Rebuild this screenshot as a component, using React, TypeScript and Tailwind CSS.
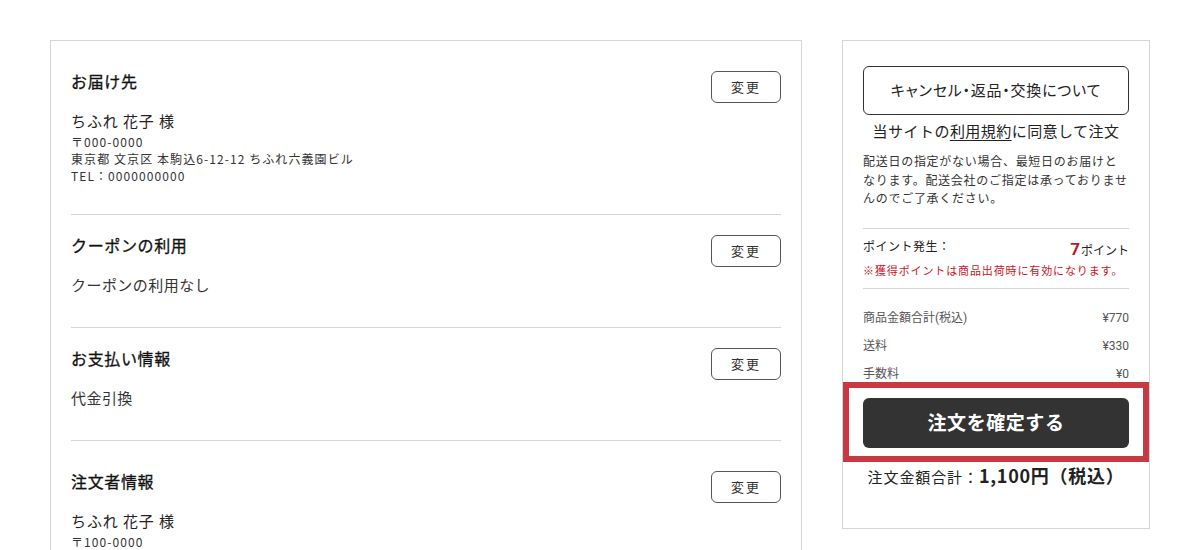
import React from 'react';

const jp = { fontFamily: '"Noto Sans CJK JP", "Noto Sans", sans-serif' };

function EditButton() {
  return (
    <button className="w-[70px] h-[32px] shrink-0 rounded-[6px] border border-[#555] bg-white text-[13px] tracking-[0.15em] text-[#333] flex items-center justify-center">
      変更
    </button>
  );
}

function Section({ title, top, children, last }: { title: string; top: string; children: React.ReactNode; last?: boolean }) {
  return (
    <div className={`${top} pb-[30px] ${last ? '' : 'border-b border-[#d6d6d6]'}`}>
      <div className="flex justify-between items-start">
        <h2 className="text-[16px] leading-[20px] font-normal tracking-[0.04em] text-[#111] [-webkit-text-stroke:0.3px_#111]">{title}</h2>
        <EditButton />
      </div>
      <div className="mt-[6px]">{children}</div>
    </div>
  );
}

function PriceRow({ label, value }: { label: string; value: string }) {
  return (
    <div className="h-[28px] flex items-center justify-between text-[12px] text-[#555]" style={{ fontFamily: 'Roboto, "Noto Sans CJK JP", sans-serif' }}>
      <span>{label}</span>
      <span>{value}</span>
    </div>
  );
}

export default function App() {
  return (
    <div className="min-h-[550px] bg-white pt-[40px] px-[50px] text-[#222]" style={jp}>
      <div className="flex items-start gap-[40px]">
        {/* left column */}
        <div className="w-[752px] shrink-0 border border-[#d6d6d6] px-[20px]">
          <Section title="お届け先" top="pt-[30px]">
            <p className="text-[15px] leading-[24px] tracking-[0.06em]">ちふれ 花子 様</p>
            <div className="text-[12px] leading-[17px] tracking-[0.09em] text-[#333]">
              <p>〒000-0000</p>
              <p>東京都 文京区 本駒込6-12-12 ちふれ六義園ビル</p>
              <p>TEL：0000000000</p>
            </div>
          </Section>
          <Section title="クーポンの利用" top="pt-[20px]">
            <p className="text-[15px] leading-[24px] tracking-[0.03em] text-[#333]">クーポンの利用なし</p>
          </Section>
          <Section title="お支払い情報" top="pt-[20px]">
            <p className="text-[15px] leading-[24px] tracking-[0.03em] text-[#333]">代金引換</p>
          </Section>
          <Section title="注文者情報" top="pt-[30px]" last>
            <p className="text-[15px] leading-[24px] tracking-[0.06em]">ちふれ 花子 様</p>
            <div className="text-[12px] leading-[17px] tracking-[0.09em] text-[#333]">
              <p>〒100-0000</p>
            </div>
          </Section>
        </div>

        {/* right column */}
        <div className="w-[308px] shrink-0 border border-[#d6d6d6] px-[20px] pt-[25px] pb-[38px]">
          <button className="w-full h-[49px] rounded-[6px] border border-[#333] bg-white text-[15px] tracking-[0.05em] [font-feature-settings:'palt'] text-[#222] flex items-center justify-center">
            キャンセル・返品・交換について
          </button>
          <p className="mt-[5px] text-[15px] leading-[22px] tracking-[0.03em] text-center text-[#222]">
            当サイトの<span className="underline underline-offset-[3px]">利用規約</span>に同意して注文
          </p>
          <p className="mt-[10px] text-[12px] leading-[18.5px] tracking-[0.06em] text-[#333]">
            配送日の指定がない場合、最短日のお届けとなります。配送会社のご指定は承っておりませんのでご了承ください。
          </p>
          <div className="mt-[20px] border-t border-[#d6d6d6] pt-[8px] pb-[10px] border-b">
            <div className="flex justify-between items-start">
              <span className="text-[12px] leading-[18px] tracking-[0.04em] text-[#222]">ポイント発生：</span>
              <span className="mt-[2px] text-[12px] leading-[20px] text-[#222]">
                <span className="text-[17px] font-bold text-[#c0161f] mr-[1px]" style={{ fontFamily: 'Roboto, sans-serif' }}>7</span>ポイント
              </span>
            </div>
            <p className="mt-[2px] text-[11px] leading-[16px] tracking-[0.08em] text-[#c8161f]">
              ※獲得ポイントは商品出荷時に有効になります。
            </p>
          </div>
          <div className="mt-[15px]">
            <PriceRow label="商品金額合計(税込)" value="¥770" />
            <PriceRow label="送料" value="¥330" />
            <PriceRow label="手数料" value="¥0" />
          </div>
          <div className="relative mt-[10px]">
            <div className="absolute -left-[20px] -right-[20px] -top-[16px] -bottom-[14px] border-[6px] border-[#c73a42] pointer-events-none" />
            <button className="w-full h-[50px] rounded-[6px] bg-[#333] text-white text-[19px] font-bold tracking-[0.03em] flex items-center justify-center">
              注文を確定する
            </button>
          </div>
          <p className="mt-[14px] text-center leading-[26px] text-[#222]">
            <span className="text-[15px] tracking-[0.06em]">注文金額合計：</span>
            <span className="text-[18px] font-bold tracking-[0.04em]">1,100円（税込）</span>
          </p>
        </div>
      </div>
    </div>
  );
}
